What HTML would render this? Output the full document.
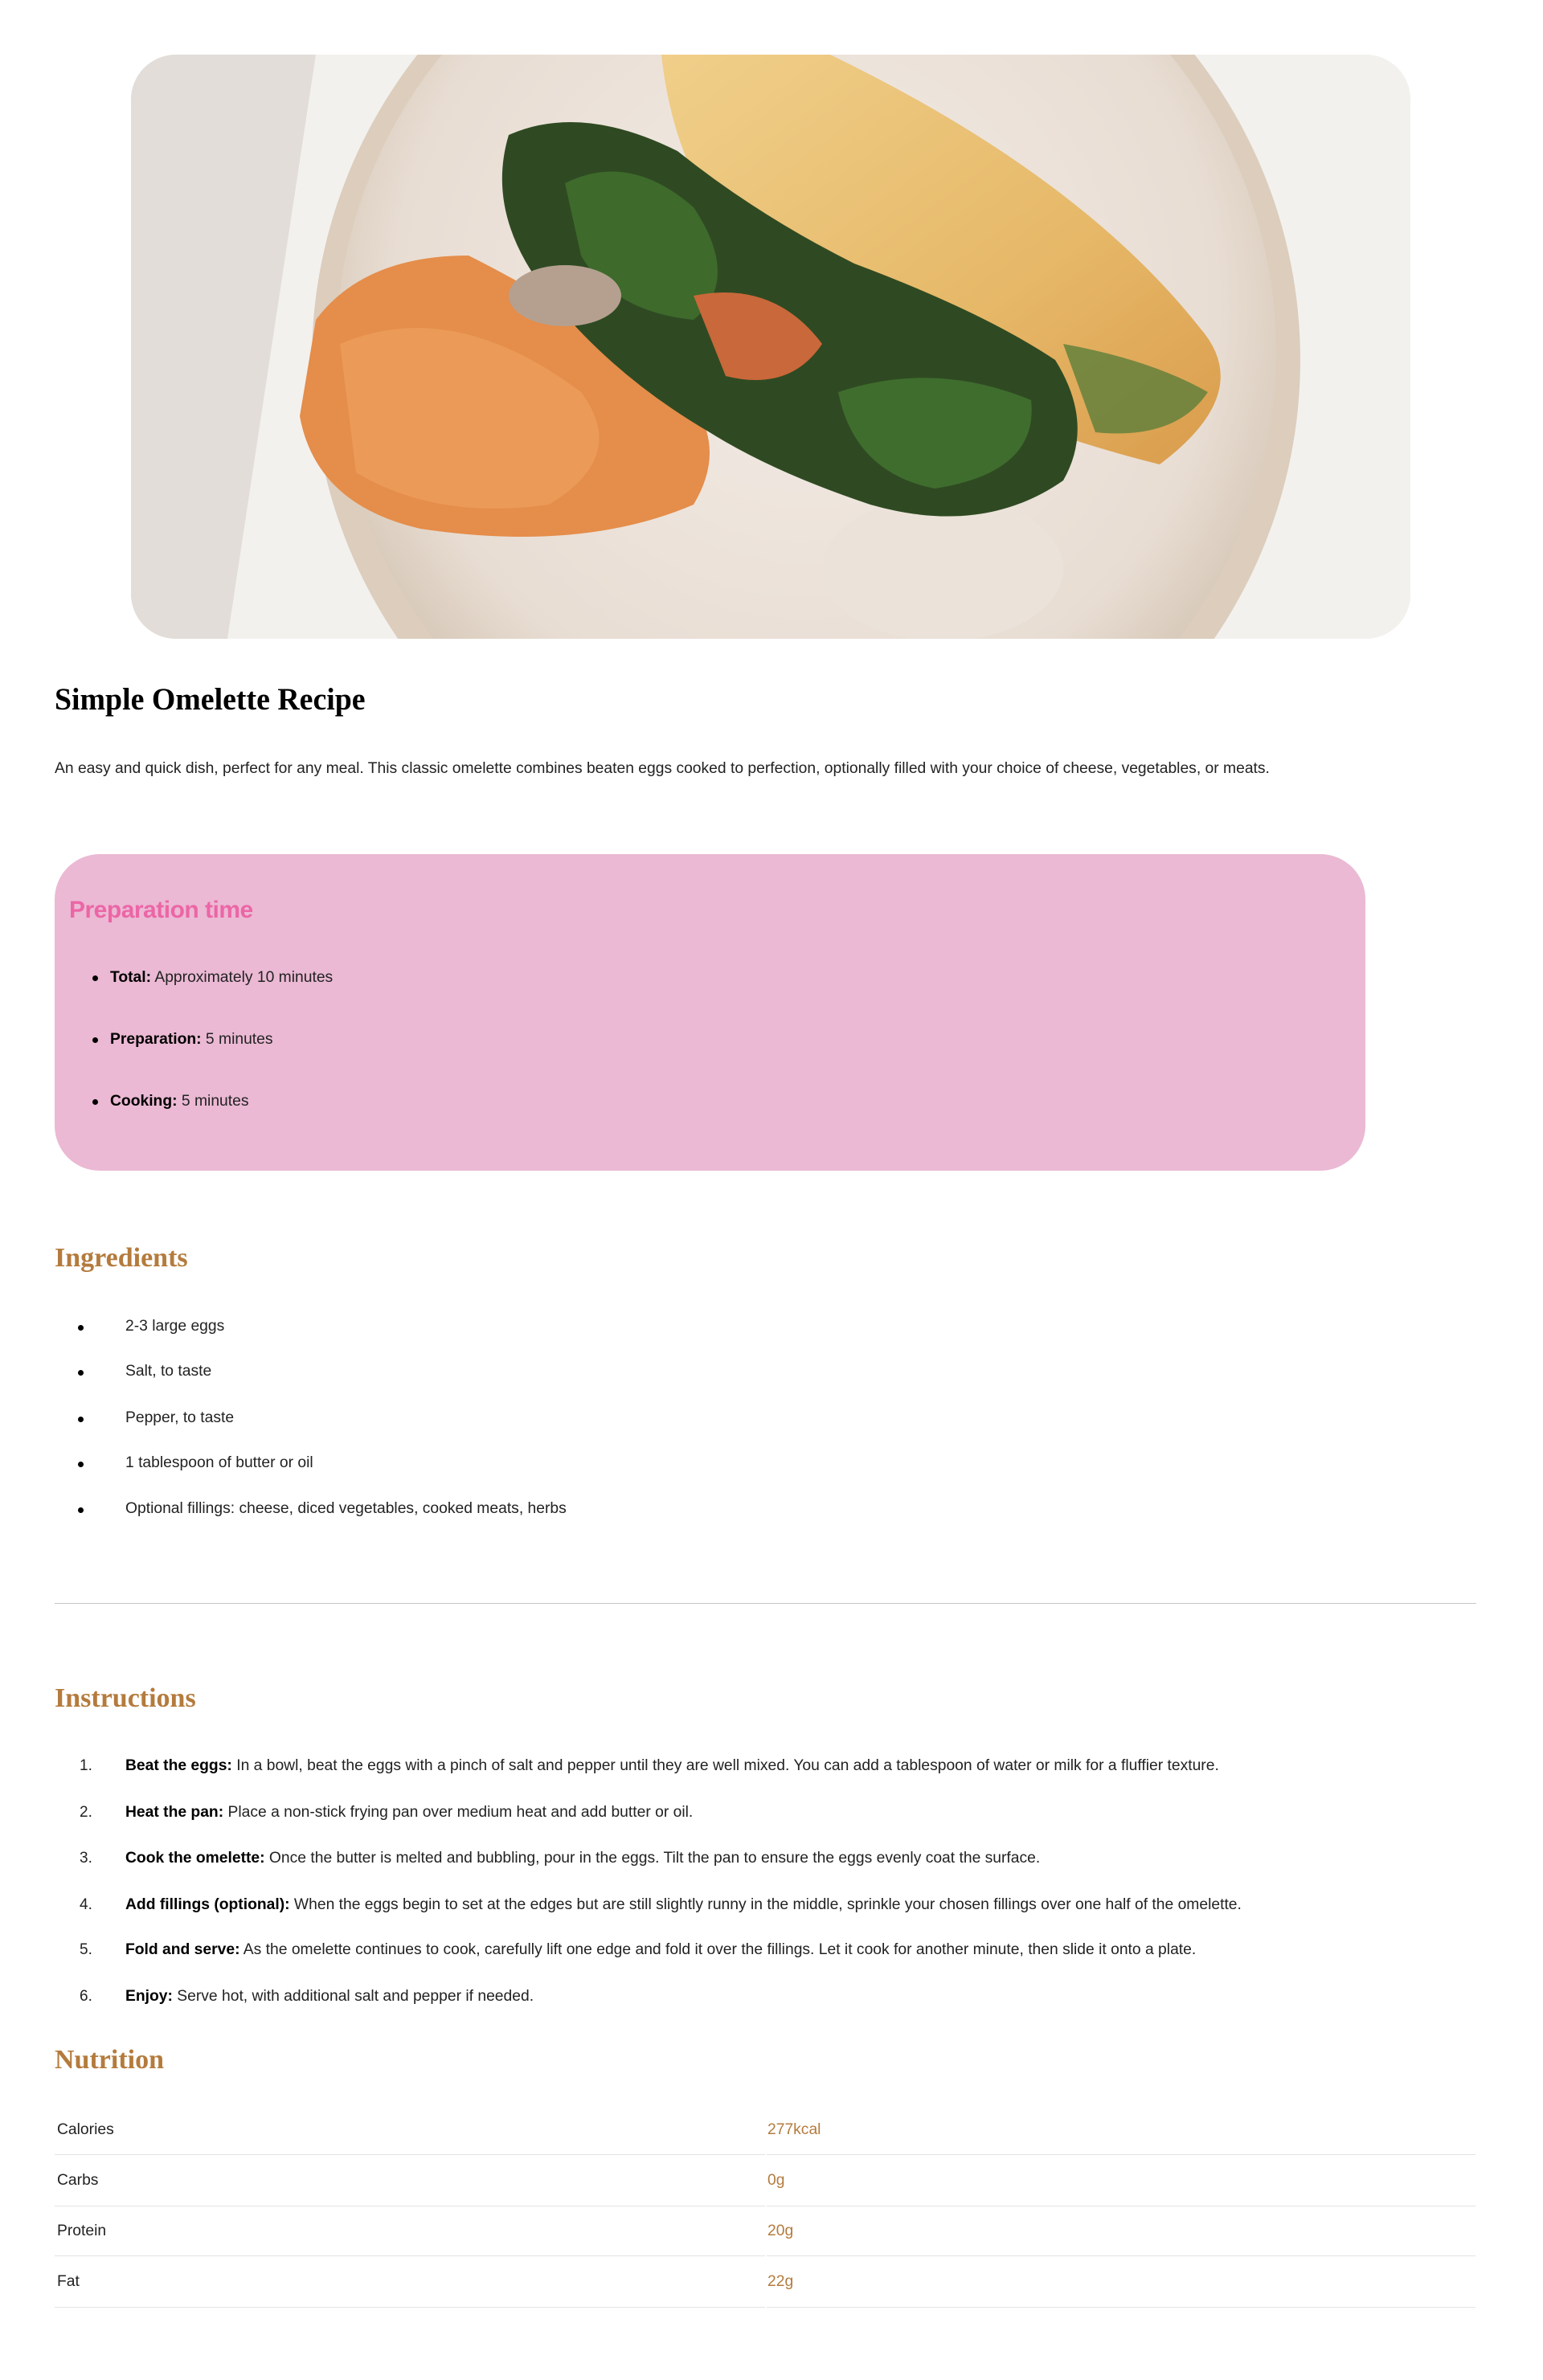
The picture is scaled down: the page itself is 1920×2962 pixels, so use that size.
<!DOCTYPE html>
<html><head><meta charset="utf-8"><style>
*{margin:0;padding:0;box-sizing:border-box}
body{width:1920px;height:2962px;background:#fff;font-family:"Liberation Sans",sans-serif;color:#222;position:relative;overflow:hidden}
.a{position:absolute;white-space:nowrap}
.img{position:absolute;left:163px;top:68px;width:1592px;height:727px;border-radius:56px;overflow:hidden;background:#ece7e2}
h1{position:absolute;left:68px;top:848px;font:bold 39px "Liberation Serif",serif;color:#000;transform:scaleX(0.97);transform-origin:left}
.p{left:68px;top:946px;font-size:19.3px;color:#222}
.pink{position:absolute;left:68px;top:1063px;width:1631px;height:394px;border-radius:56px;background:#ebb9d4}
.pt{left:86px;top:1116px;font-size:30px;font-weight:bold;color:#ec66a6;letter-spacing:-0.5px}
.li{font-size:19.3px;color:#222}
.li b{color:#000}
.dot{position:absolute;width:7px;height:7px;border-radius:50%;background:#000}
.h2{left:68px;font:bold 34px "Liberation Serif",serif;color:#b47b3d}
.num{font-size:19px;color:#222}
.row{position:absolute;height:1px;background:#e3e3e3}
.val{color:#b47b3d}
</style></head><body>
<div class="img">
<svg width="1592" height="727" viewBox="0 0 1592 727">
<defs>
<radialGradient id="pl" cx="0.5" cy="0.45" r="0.55"><stop offset="0" stop-color="#f3ece6"/><stop offset="0.8" stop-color="#e8ddd3"/><stop offset="1" stop-color="#d6c7b6"/></radialGradient>
<linearGradient id="om" x1="0" y1="0" x2="1" y2="1"><stop offset="0" stop-color="#f0cf8a"/><stop offset="0.6" stop-color="#e6b868"/><stop offset="1" stop-color="#d99c4c"/></linearGradient>
</defs>
<rect width="1592" height="727" fill="#efebe7"/>
<rect x="0" y="0" width="320" height="727" fill="#e2ddd8"/>
<path d="M230 0 L1592 0 L1592 727 L120 727 Z" fill="#f3f1ee"/>
<circle cx="840" cy="380" r="615" fill="#dccdbd"/>
<circle cx="840" cy="370" r="585" fill="url(#pl)"/>
<ellipse cx="1010" cy="640" rx="150" ry="90" fill="#ebe2d9"/>
<path d="M660 0 L870 0 Q1180 150 1330 340 Q1400 420 1280 510 Q1000 440 820 300 Q680 190 660 0 Z" fill="url(#om)"/>
<path d="M230 330 Q290 250 420 250 Q520 300 640 380 Q760 460 700 560 Q560 620 360 590 Q230 560 210 450 Z" fill="#e58d4a"/>
<path d="M260 360 Q400 300 560 420 Q620 500 520 560 Q380 580 280 520 Z" fill="#eea05c" opacity="0.7"/>
<path d="M470 100 Q560 60 680 120 Q780 200 900 260 Q1060 320 1150 380 Q1200 460 1160 530 Q1060 600 920 560 Q800 520 720 470 Q600 400 520 300 Q440 200 470 100 Z" fill="#2f4a22"/>
<path d="M540 160 Q620 120 700 190 Q760 280 700 330 Q600 320 560 250 Z" fill="#3e6a2c"/>
<path d="M880 420 Q1000 380 1120 430 Q1130 520 1000 540 Q900 520 880 420 Z" fill="#3f6d2e"/>
<path d="M700 300 Q800 280 860 360 Q820 420 740 400 Z" fill="#c9683a"/>
<ellipse cx="540" cy="300" rx="70" ry="38" fill="#b5a090"/>
<path d="M1160 360 Q1270 380 1340 420 Q1300 480 1200 470 Z" fill="#5d7e3a" opacity="0.8"/>
</svg>
</div>
<h1>Simple Omelette Recipe</h1>
<div class="a p">An easy and quick dish, perfect for any meal. This classic omelette combines beaten eggs cooked to perfection, optionally filled with your choice of cheese, vegetables, or meats.</div>
<div class="pink"></div>
<div class="a pt">Preparation time</div>
<div class="dot" style="left:115px;top:1214px"></div><div class="a li" style="left:137px;top:1206px"><b>Total:</b> Approximately 10 minutes</div>
<div class="dot" style="left:115px;top:1291px"></div><div class="a li" style="left:137px;top:1283px"><b>Preparation:</b> 5 minutes</div>
<div class="dot" style="left:115px;top:1368px"></div><div class="a li" style="left:137px;top:1360px"><b>Cooking:</b> 5 minutes</div>

<div class="a h2" style="top:1547px">Ingredients</div>
<div class="dot" style="left:97px;top:1649px"></div><div class="a li" style="left:156px;top:1640px">2-3 large eggs</div>
<div class="dot" style="left:97px;top:1705px"></div><div class="a li" style="left:156px;top:1696px">Salt, to taste</div>
<div class="dot" style="left:97px;top:1763px"></div><div class="a li" style="left:156px;top:1754px">Pepper, to taste</div>
<div class="dot" style="left:97px;top:1819px"></div><div class="a li" style="left:156px;top:1810px">1 tablespoon of butter or oil</div>
<div class="dot" style="left:97px;top:1876px"></div><div class="a li" style="left:156px;top:1867px">Optional fillings: cheese, diced vegetables, cooked meats, herbs</div>

<div class="row" style="left:68px;top:1995px;width:1769px;background:#c8c8c8"></div>

<div class="a h2" style="top:2095px">Instructions</div>
<div class="a num" style="left:99px;top:2187px">1.</div><div class="a li" style="left:156px;top:2187px"><b>Beat the eggs:</b> In a bowl, beat the eggs with a pinch of salt and pepper until they are well mixed. You can add a tablespoon of water or milk for a fluffier texture.</div>
<div class="a num" style="left:99px;top:2245px">2.</div><div class="a li" style="left:156px;top:2245px"><b>Heat the pan:</b> Place a non-stick frying pan over medium heat and add butter or oil.</div>
<div class="a num" style="left:99px;top:2302px">3.</div><div class="a li" style="left:156px;top:2302px"><b>Cook the omelette:</b> Once the butter is melted and bubbling, pour in the eggs. Tilt the pan to ensure the eggs evenly coat the surface.</div>
<div class="a num" style="left:99px;top:2360px">4.</div><div class="a li" style="left:156px;top:2360px"><b>Add fillings (optional):</b> When the eggs begin to set at the edges but are still slightly runny in the middle, sprinkle your chosen fillings over one half of the omelette.</div>
<div class="a num" style="left:99px;top:2416px">5.</div><div class="a li" style="left:156px;top:2416px"><b>Fold and serve:</b> As the omelette continues to cook, carefully lift one edge and fold it over the fillings. Let it cook for another minute, then slide it onto a plate.</div>
<div class="a num" style="left:99px;top:2474px">6.</div><div class="a li" style="left:156px;top:2474px"><b>Enjoy:</b> Serve hot, with additional salt and pepper if needed.</div>

<div class="a h2" style="top:2545px">Nutrition</div>
<div class="a li" style="left:71px;top:2640px">Calories</div><div class="a li val" style="left:955px;top:2640px">277kcal</div>
<div class="row" style="left:68px;top:2681px;width:884px"></div><div class="row" style="left:954px;top:2681px;width:882px"></div>
<div class="a li" style="left:71px;top:2703px">Carbs</div><div class="a li val" style="left:955px;top:2703px">0g</div>
<div class="row" style="left:68px;top:2745px;width:884px"></div><div class="row" style="left:954px;top:2745px;width:882px"></div>
<div class="a li" style="left:71px;top:2766px">Protein</div><div class="a li val" style="left:955px;top:2766px">20g</div>
<div class="row" style="left:68px;top:2807px;width:884px"></div><div class="row" style="left:954px;top:2807px;width:882px"></div>
<div class="a li" style="left:71px;top:2829px">Fat</div><div class="a li val" style="left:955px;top:2829px">22g</div>
<div class="row" style="left:68px;top:2871px;width:884px"></div><div class="row" style="left:954px;top:2871px;width:882px"></div>
</body></html>
